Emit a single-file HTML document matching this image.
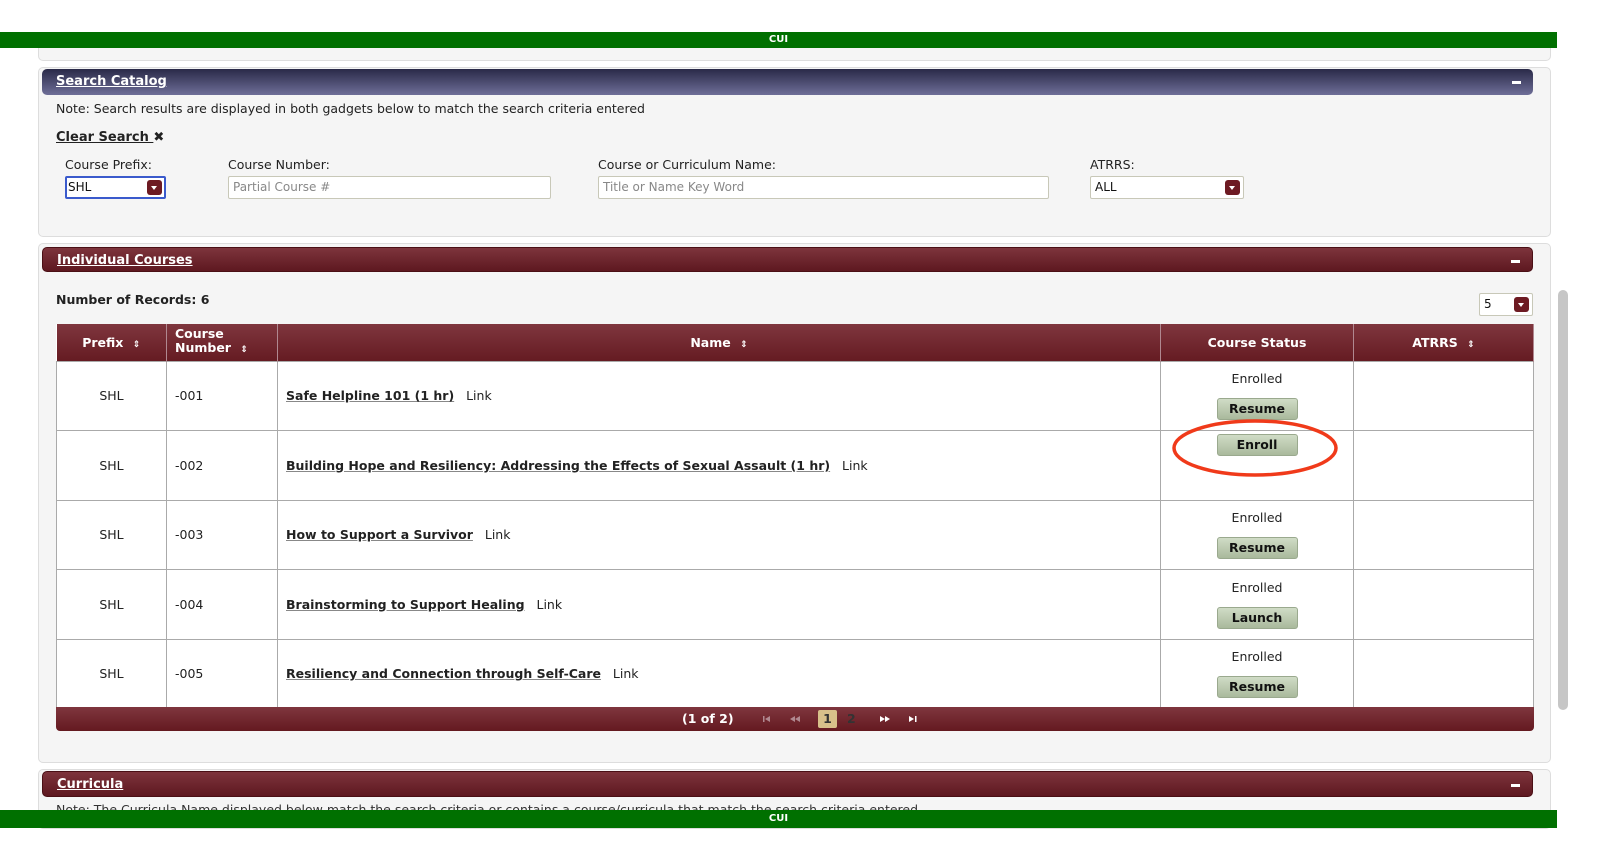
<!DOCTYPE html>
<html><head><meta charset="utf-8"><style>
*{box-sizing:border-box;margin:0;padding:0}
body{width:1600px;height:845px;overflow:hidden;background:#fff;font-family:"DejaVu Sans","Liberation Sans",sans-serif;font-size:12px;color:#222;position:relative}
.abs{position:absolute}
.green{position:absolute;left:0;width:1557px;background:#007000;color:#fff;text-align:center;font-size:10px;font-weight:bold;line-height:16px;z-index:10}
.panel{position:absolute;left:38px;width:1513px;background:#f5f5f5;border:1px solid #ddd;border-radius:5px}
.hdr{position:absolute;left:42px;width:1491px;height:26px;border-radius:5px;color:#fff;font-weight:bold;font-size:13px;line-height:26px;padding-left:14px}
.hdr u{text-decoration:underline}
.hdr .min{position:absolute;right:12px;top:12px;width:9px;height:3px;background:#fff}
.mar{background:linear-gradient(#7d343c,#5e1820);border:1px solid #4a0f15}
.slate{background:linear-gradient(#2a2a48,#6e6e98)}
.inp{position:absolute;height:23px;background:#fff;border:1px solid #c8c8b8;border-radius:2px;font-size:12px;color:#888;line-height:21px;padding-left:4px}
.dd{position:absolute;width:15px;height:15px;background:#6d1a22;border-radius:3px;top:3px;right:3px}
.dd:after{content:"";position:absolute;left:4px;top:6px;border:3.5px solid transparent;border-top:4px solid #fff}
table{position:absolute;left:56px;top:324px;width:1478px;border-collapse:collapse;background:#fff}
th{height:37px;background:linear-gradient(#7f363e,#651b22);color:#fff;font-size:12.5px;border-right:1px solid #b08890;font-weight:bold}
td{height:69.5px;border:1px solid #aaa;text-align:center;font-size:12.5px}
td.n{text-align:left;padding-left:8px}
td.nm{text-align:left;padding-left:8px}
td.nm b{text-decoration:underline;text-decoration-color:#888}
.btn{display:inline-block;width:81px;height:22px;background:linear-gradient(#d0dcc6,#a9b99c);border:1px solid #9aa98e;border-radius:3px;font-weight:bold;font-size:12.5px;line-height:20px;color:#111}
.s{font-size:9px;margin-left:5px}
.foot{position:absolute;left:56px;top:707px;width:1478px;height:24px;background:linear-gradient(#7f363e,#641920);border-radius:0 0 4px 4px;color:#fff;font-weight:bold;font-size:12.5px}
</style></head><body>
<div class="green" style="top:32px">CUI</div>
<div class="panel" style="top:48px;height:13px;border-top:none;border-radius:0 0 5px 5px"></div>
<div class="panel" style="top:67px;height:170px"></div>
<div class="hdr slate" style="top:69px"><u>Search Catalog</u><span class="min"></span></div>
<div class="abs" style="left:56px;top:101px;font-size:12.5px">Note: Search results are displayed in both gadgets below to match the search criteria entered</div>
<div class="abs" style="left:56px;top:130px;font-size:13px;font-weight:bold"><u>Clear Search </u> ✖</div>
<div class="abs" style="left:65px;top:157px;font-size:12.5px">Course Prefix:</div>
<div class="abs" style="left:228px;top:157px;font-size:12.5px">Course Number:</div>
<div class="abs" style="left:598px;top:157px;font-size:12.5px">Course or Curriculum Name:</div>
<div class="abs" style="left:1090px;top:157px;font-size:12.5px">ATRRS:</div>
<div class="inp" style="left:65px;top:176px;width:101px;border:2px solid #3a5acc;color:#111;line-height:19px;padding-left:1px">SHL<span class="dd" style="top:2px;right:2px"></span></div>
<div class="inp" style="left:228px;top:176px;width:323px">Partial Course #</div>
<div class="inp" style="left:598px;top:176px;width:451px">Title or Name Key Word</div>
<div class="inp" style="left:1090px;top:176px;width:154px;color:#111">ALL<span class="dd"></span></div>

<div class="panel" style="top:243px;height:520px"></div>
<div class="hdr mar" style="top:247px;height:25px;line-height:25px"><u>Individual Courses</u><span class="min"></span></div>
<div class="abs" style="left:56px;top:292px;font-weight:bold;font-size:12.5px">Number of Records: 6</div>
<div class="inp" style="left:1479px;top:293px;width:54px;height:23px;color:#111">5<span class="dd"></span></div>

<table>
<tr><th style="width:110px">Prefix <span class="s">⇕</span></th><th style="width:111px;text-align:left;padding-left:8px;line-height:14px">Course<br>Number <span class="s">⇕</span></th><th style="width:883px">Name <span class="s">⇕</span></th><th style="width:193px">Course Status</th><th>ATRRS <span class="s">⇕</span></th></tr>
<tr><td>SHL</td><td class="n">-001</td><td class="nm"><b>Safe Helpline 101 (1 hr)</b> &nbsp; Link</td><td>Enrolled<br><div class="btn" style="margin-top:12px">Resume</div></td><td></td></tr>
<tr><td>SHL</td><td class="n">-002</td><td class="nm"><b>Building Hope and Resiliency: Addressing the Effects of Sexual Assault (1 hr)</b> &nbsp; Link</td><td style="vertical-align:top;padding-top:3px"><div class="btn">Enroll</div></td><td></td></tr>
<tr><td>SHL</td><td class="n">-003</td><td class="nm"><b>How to Support a Survivor</b> &nbsp; Link</td><td>Enrolled<br><div class="btn" style="margin-top:12px">Resume</div></td><td></td></tr>
<tr><td>SHL</td><td class="n">-004</td><td class="nm"><b>Brainstorming to Support Healing</b> &nbsp; Link</td><td>Enrolled<br><div class="btn" style="margin-top:12px">Launch</div></td><td></td></tr>
<tr><td>SHL</td><td class="n">-005</td><td class="nm"><b>Resiliency and Connection through Self-Care</b> &nbsp; Link</td><td>Enrolled<br><div class="btn" style="margin-top:12px">Resume</div></td><td></td></tr>
</table>
<div class="foot">
<span class="abs" style="left:626px;top:4px">(1 of 2)</span>
<svg class="abs" style="left:706px;top:8px" width="10" height="8"><rect x="1" y="1" width="1.5" height="6" fill="#b08890"/><path d="M8 1L3 4L8 7Z" fill="#b08890"/></svg>
<svg class="abs" style="left:733px;top:8px" width="12" height="8"><path d="M6 1L1 4L6 7ZM11 1L6 4L11 7Z" fill="#b08890"/></svg>
<span class="abs" style="left:762px;top:3px;width:19px;height:18px;background:#d8c08a;border-radius:2px;color:#333;text-align:center;line-height:18px">1</span>
<span class="abs" style="left:791px;top:4px;color:#333">2</span>
<svg class="abs" style="left:823px;top:8px" width="12" height="8"><path d="M1 1L6 4L1 7ZM6 1L11 4L6 7Z" fill="#fff"/></svg>
<svg class="abs" style="left:852px;top:8px" width="10" height="8"><path d="M1 1L6 4L1 7Z" fill="#fff"/><rect x="7" y="1" width="1.5" height="6" fill="#fff"/></svg>
</div>
<svg class="abs" style="left:1170px;top:418px" width="170" height="62"><ellipse cx="85" cy="30" rx="81" ry="27" fill="none" stroke="#f03a1a" stroke-width="3.5"/></svg>

<div class="panel" style="top:769px;height:60px"></div>
<div class="hdr mar" style="top:771px"><u>Curricula</u><span class="min"></span></div>
<div class="abs" style="left:56px;top:802px;font-size:12.5px;color:#333">Note: The Curricula Name displayed below match the search criteria or contains a course/curricula that match the search criteria entered</div>
<div class="green" style="top:810px;height:18px;line-height:18px">CUI</div>
<div class="abs" style="left:1558px;top:290px;width:10px;height:420px;background:#c6c6c6;border-radius:5px"></div>
</body></html>
